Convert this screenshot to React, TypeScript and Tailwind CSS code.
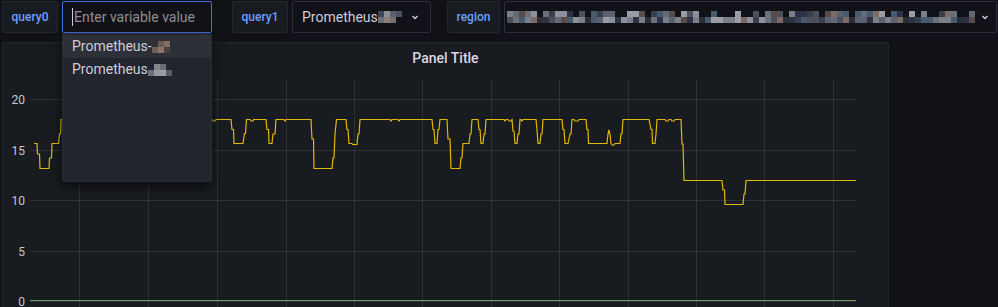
import React from "react";

// pixelated (censored) text stand-in: columns of two 6px cells
type Col = [string | null, string | null];

const PALETTE = [
  "#4b505c", "#6c707b", "#8b909c", "#3a3f4c", "#5b6170", "#7d6a66",
  "#5a4a48", "#465a70", "#2c3346", "#9a9ca6", "#656a78", "#7b7f8a",
];

function makeCols(seed: number, count: number, gapEvery: number[]): Col[] {
  let s = seed;
  const rnd = () => {
    s = (s * 9301 + 49297) % 233280;
    return s / 233280;
  };
  const cols: Col[] = [];
  for (let i = 0; i < count; i++) {
    const pick = () => PALETTE[Math.floor(rnd() * PALETTE.length)];
    if (gapEvery.includes(i)) {
      cols.push([null, "#2a2d35"]);
    } else {
      cols.push([rnd() > 0.2 ? pick() : null, pick()]);
    }
  }
  return cols;
}

function Pixels({ cols, size = 6 }: { cols: Col[]; size?: number }) {
  return (
    <div className="flex">
      {cols.map((c, i) => (
        <div key={i} className="flex flex-col">
          <div style={{ width: size, height: size, background: c[0] ?? "transparent" }} />
          <div style={{ width: size, height: size, background: c[1] ?? "transparent" }} />
        </div>
      ))}
    </div>
  );
}

function Chevron() {
  return (
    <svg width="10" height="10" viewBox="0 0 10 10" className="shrink-0">
      <path d="M2.5 4 L5 6.5 L7.5 4" fill="none" stroke="#ccccdc" strokeWidth="1.4" />
    </svg>
  );
}

function VarLabel({ text, width }: { text: string; width: string }) {
  return (
    <div
      className={`flex h-[32px] ${width} shrink-0 items-center justify-center rounded-[2px] border border-[#24262c] bg-[#181b1f] text-[12px] font-medium text-[#6e9fff]`}
    >
      {text}
    </div>
  );
}

// yellow series, page coordinates
const yellow: [number, number][] = [
  [34, 143.5], [37, 143.5], [37.5, 154], [39.5, 154], [40, 168.5], [49, 168.5], [49.5, 158], [51.5, 158],
  [52, 143.5], [58.5, 143.5], [59.5, 134], [60.5, 134], [61, 119.5], [212, 119.5], [213, 121], [215, 121],
  [216, 119.5], [231, 119.5], [232, 129.5], [233.5, 129.5], [234, 143.5], [243, 143.5], [244.5, 133.5],
  [245.5, 133.5], [246.5, 119.5], [250, 119.5], [251, 121], [253, 121], [253.5, 119.5], [266, 119.5],
  [267, 129.5], [268.5, 129.5], [269, 143.5], [272, 143.5], [273, 134], [275, 134], [276, 119.5],
  [284, 119.5], [285, 121], [286, 119.5], [311, 119.5], [312, 139], [313.5, 139], [314, 168.5],
  [332, 168.5], [333, 158], [334, 158], [335, 134], [336.5, 119.5], [346, 119.5], [347, 129.5],
  [348, 129.5], [349, 143.5], [352, 143.5], [352.5, 144.5], [357, 144.5], [358, 134], [359, 134],
  [360, 119.5], [390, 119.5], [391, 121], [392, 119.5], [398, 119.5], [399, 121], [400, 119.5],
  [432, 119.5], [433, 129.5], [434, 129.5], [435, 143.5], [437, 143.5], [438, 129.5], [439, 129.5],
  [440, 119.5], [447, 119.5], [448, 139], [450, 139], [451, 168.5], [460, 168.5], [461, 158], [462, 158],
  [463, 143.5], [469, 143.5], [470, 134], [471, 134], [472, 119.5], [478, 119.5], [479, 129.5],
  [480, 129.5], [481, 143.5], [483, 143.5], [484, 134], [485, 134], [486, 119.5], [504, 119.5],
  [505, 121], [506, 119.5], [508, 119.5], [509, 121], [511, 121], [512, 119.5], [513, 131], [514, 131],
  [515, 143.5], [517, 143.5], [518, 134], [519, 134], [520, 119.5], [521, 119.5], [522, 121],
  [523, 119.5], [536, 119.5], [537, 129.5], [538, 143.5], [540, 143.5], [541, 134], [542, 134],
  [543, 119.5], [562, 119.5], [563, 129.5], [564, 129.5], [565, 143.5], [568, 143.5], [570, 134],
  [571, 134], [572, 119.5], [574, 119.5], [575, 121], [578, 121], [579, 119.5], [586, 119.5],
  [587, 129.5], [588, 129.5], [588.5, 143.5], [607, 143.5], [608, 134], [609, 130], [610, 134],
  [611, 143.5], [612, 145], [614, 145], [615, 143.5], [620, 143.5], [621, 134], [622, 134],
  [623, 119.5], [649, 119.5], [651, 129.5], [652, 129.5], [652.5, 143.5], [655, 143.5], [656, 134],
  [657, 119.5], [665, 119.5], [666, 121], [668, 121], [669, 119.5], [671, 119.5], [672, 121],
  [674, 121], [675, 119.5], [681, 119.5], [682, 144], [683, 144], [684, 180.5], [722, 180.5],
  [723, 190], [724.5, 190], [725, 204.5], [743, 204.5], [744, 194], [745, 194], [746, 180.5],
  [856, 180.5],
];

const vGrid = [79, 148, 217, 286, 354, 422, 491, 559, 628, 696, 764, 833];
const hGrid: [number, string][] = [
  [99, "20"],
  [150, "15"],
  [200, "10"],
  [251, "5"],
  [301, "0"],
];

function Chart() {
  return (
    <svg width="885" height="234" className="block" style={{ fontFamily: "Roboto, sans-serif" }}>
      <g transform="translate(-3,-73)">
        {vGrid.map((x) => (
          <line key={x} x1={x + 0.5} x2={x + 0.5} y1={80} y2={310} stroke="rgba(204,204,220,0.12)" />
        ))}
        {hGrid.map(([y, label]) => (
          <g key={label}>
            <line x1={30} x2={856} y1={y + 0.5} y2={y + 0.5} stroke="rgba(204,204,220,0.12)" />
            <text x={25} y={y + 4.5} textAnchor="end" fontSize="12" fill="#c7c8d1">
              {label}
            </text>
          </g>
        ))}
        <line x1={30} x2={856} y1={300.5} y2={300.5} stroke="#6a9f62" strokeWidth="1" />
        <polyline
          points={yellow.map(([x, y]) => `${x},${y}`).join(" ")}
          fill="none"
          stroke="#e0b80a"
          strokeWidth="1.2"
        />
      </g>
    </svg>
  );
}

const q1Cols: Col[] = [
  ["#3d4656", "#6b6e74"],
  ["#8d8f96", "#8a7e7c"],
  ["#5a5f6b", "#7a6e70"],
  ["#4a5160", null],
];
const dd1Cols: Col[] = [
  [null, "#6d5f55"],
  ["#6b5a52", "#8c7469"],
  ["#7f6d66", "#4a3f3c"],
  [null, null],
];
const dd2Cols: Col[] = [
  [null, "#707079"],
  ["#85868d", "#9a9aa2"],
  ["#6c6d74", "#9c9ca4"],
  [null, "#5c5d64"],
];

const regionCols = makeCols(17, 78, [5, 13, 23, 32, 46, 57, 66, 75]);

export default function App() {
  return (
    <div
      className="relative h-[307px] w-[998px] overflow-hidden bg-[#111217] text-[#ccccdc]"
      style={{ fontFamily: "Roboto, 'Liberation Sans', sans-serif" }}
    >
      {/* variables bar */}
      <div className="flex pt-px">
        <div className="ml-[2px] flex">
          <VarLabel text="query0" width="w-[56px]" />
          <div className="ml-[4px] flex h-[32px] w-[150px] items-center rounded-[2px] border border-[#3d71d9] bg-[#111217] pl-[9px] text-[14px]">
            <span className="mr-px h-[18px] w-px bg-[#ccccdc]" />
            <span className="text-[#8e8e94]">Enter variable value</span>
          </div>
        </div>
        <div className="ml-[20px] flex">
          <VarLabel text="query1" width="w-[56px]" />
          <div className="ml-[4px] flex h-[32px] w-[139px] items-center rounded-[2px] border border-[#2c2e35] bg-[#111217] pl-[9px] pr-[10px] text-[14px]">
            <span>Prometheus</span>
            <Pixels cols={q1Cols} />
            <span className="flex-1" />
            <Chevron />
          </div>
        </div>
        <div className="ml-[16px] flex">
          <VarLabel text="region" width="w-[53px]" />
          <div className="ml-[4px] flex h-[32px] w-[493px] items-center rounded-[2px] border border-[#2c2e35] bg-[#111217] pl-[2px] pr-[6px]">
            <Pixels cols={regionCols} />
            <span className="flex-1" />
            <Chevron />
          </div>
        </div>
      </div>

      {/* panel */}
      <div className="ml-[2px] mt-[9px] h-[300px] w-[887px] rounded-[2px] border border-[#23252b] bg-[#181b1f]">
        <div className="flex h-[30px] items-center justify-center text-[14px] font-medium text-[#d8d9e0]">
          Panel Title
        </div>
        <Chart />
      </div>

      {/* dropdown menu */}
      <div className="absolute left-[62px] top-[33px] h-[149px] w-[150px] rounded-[2px] border border-[#2a2d33] bg-[#22252b] py-[1px] shadow-[0_4px_12px_rgba(0,0,0,0.6)]">
        <div className="flex h-[23px] items-center bg-[#2d3036] pl-[9px] text-[14px] text-[#ccccdc]">
          <span>Prometheus-</span>
          <Pixels cols={dd1Cols} size={6} />
        </div>
        <div className="flex h-[23px] items-center pl-[9px] text-[14px] text-[#ccccdc]">
          <span>Prometheus</span>
          <Pixels cols={dd2Cols} size={6} />
        </div>
      </div>
    </div>
  );
}
